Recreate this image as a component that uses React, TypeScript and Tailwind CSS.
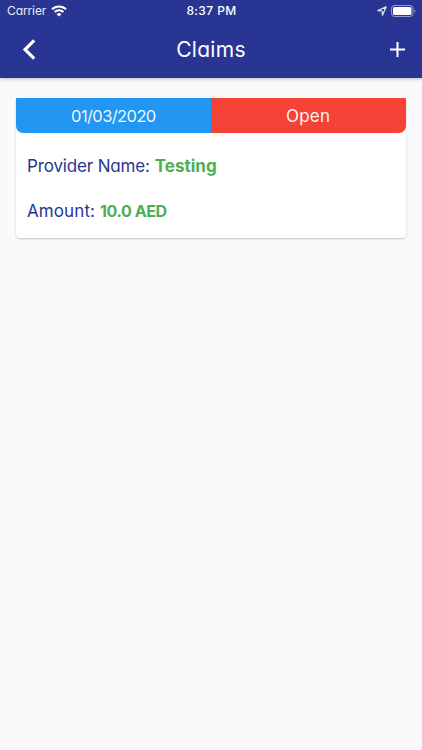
interface Claim {
  id: number;
  date: string;
  status: string;
  provider: string;
  amount: string;
}

const claims: Claim[] = [
  { id: 1, date: '01/03/2020', status: 'Open', provider: 'Testing', amount: '10.0 AED' },
];

function StatusBar() {
  return (
    <div className="grid h-[22px] grid-cols-3 items-center pr-[6px] pl-[7px] text-[12px] leading-none">
      <div className="flex items-center gap-[5px]">
        <span className="tracking-[-0.1px] text-white/90">Carrier</span>
        <svg width="16" height="12" viewBox="0 0 16 12" fill="none" stroke="white" strokeWidth="2.1">
          <path d="M1 4.3a10 10 0 0 1 14 0" />
          <path d="M3.6 7.1a6.2 6.2 0 0 1 8.8 0" />
          <path d="M8 11.6 5.6 9.2a3.4 3.4 0 0 1 4.8 0Z" fill="white" stroke="none" />
        </svg>
      </div>
      <span className="text-center font-medium tracking-[0.4px]">8:37 PM</span>
      <div className="flex items-center justify-end gap-[4px]">
        <svg width="10" height="10" viewBox="0 0 11 11" fill="none" stroke="#e8eaf6" strokeWidth="1.3" strokeLinejoin="round">
          <path d="M10 1 1 5l4.5.5.5 4.7Z" />
        </svg>
        <svg width="25" height="12" viewBox="0 0 25 12" fill="none">
          <rect x="0.5" y="0.5" width="21.5" height="11" rx="3" stroke="white" strokeOpacity="0.5" />
          <rect x="2" y="2" width="18.5" height="8" rx="1.6" fill="white" />
          <path d="M23.3 4.2v3.6c.7-.3 1.1-1 1.1-1.8s-.4-1.5-1.1-1.8Z" fill="white" fillOpacity="0.5" />
        </svg>
      </div>
    </div>
  );
}

function Header() {
  return (
    <header className="h-[78px] bg-[#283593] text-white shadow-[0_1px_4px_rgba(0,0,0,0.25)]">
      <StatusBar />
      <div className="grid h-[55px] grid-cols-[1fr_auto_1fr] items-center">
        <button type="button" aria-label="Back" className="ml-[22px] w-[14px]">
          <svg width="14" height="21" viewBox="0 0 14 21" fill="none" stroke="white" strokeWidth="3.2">
            <path d="M12.2 1.4 3 10.5l9.2 9.1" />
          </svg>
        </button>
        <h1 className="text-[21px] leading-none tracking-[0.3px]">Claims</h1>
        <button type="button" aria-label="Add claim" className="mr-[17px] justify-self-end">
          <svg width="15" height="15" viewBox="0 0 15 15" stroke="white" strokeWidth="2">
            <path d="M7.5 0v15M0 7.5h15" />
          </svg>
        </button>
      </div>
    </header>
  );
}

function ClaimCard({ claim }: { claim: Claim }) {
  return (
    <article className="h-[140px] rounded-b-[4px] bg-white text-[17px] text-[#283593] shadow-[0_1px_2px_rgba(0,0,0,0.22)]">
      <div className="grid h-[34.5px] grid-cols-2 overflow-hidden rounded-t-[1px] rounded-b-[7px] text-center leading-[36px] text-white/95">
        <div className="bg-[#2196f3]">
          <span className="text-[16.5px] tracking-[-0.6px]">{claim.date}</span>
        </div>
        <div className="bg-[#f44336]">
          <span className="tracking-[0.2px]">{claim.status}</span>
        </div>
      </div>
      <div className="flex flex-col gap-[21px] px-[11px] pt-[21px] leading-6">
        <p className="flex gap-[5px]">
          <span className="tracking-[-0.15px]">Provider Name:</span>
          <span className="font-bold text-[#4caf50]">{claim.provider}</span>
        </p>
        <p className="flex gap-[5px]">
          <span className="tracking-[0.1px]">Amount:</span>
          <span className="text-[16px] font-bold tracking-[-0.4px] text-[#4caf50]">{claim.amount}</span>
        </p>
      </div>
    </article>
  );
}

export default function App() {
  return (
    <div className="min-h-screen bg-[#fafafa] font-['Inter',sans-serif] [font-feature-settings:'cv11']">
      <Header />
      <main className="flex flex-col gap-4 pt-5 pr-[16.5px] pl-4">
        {claims.map((claim) => (
          <ClaimCard key={claim.id} claim={claim} />
        ))}
      </main>
    </div>
  );
}
